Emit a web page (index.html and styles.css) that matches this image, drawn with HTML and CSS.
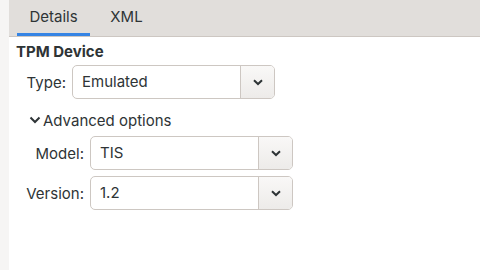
FILE: index.html
```html
<!DOCTYPE html>
<html lang="en">
<head>
    <meta charset="UTF-8">
    <title>TPM Device</title>
    <link rel="stylesheet" href="styles.css">
</head>
<body>
    <div class="side"></div>
    <div class="main">
        <div class="tabs">
            <div class="tab active">Details</div>
            <div class="tab">XML</div>
        </div>
        <div class="content">
            <h3>TPM Device</h3>
            <div class="row type-row">
                <label>Type:</label>
                <div class="combo type-combo">
                    <span class="value">Emulated</span>
                    <span class="arrow">
                        <svg width="10" height="7" viewBox="0 0 10 7"><path d="M1 1.2 L5 5 L9 1.2" fill="none" stroke="#2e3436" stroke-width="2"/></svg>
                    </span>
                </div>
            </div>
            <div class="expander">
                <svg width="12" height="8" viewBox="0 0 12 8"><path d="M1.5 1.5 L6 6 L10.5 1.5" fill="none" stroke="#2e3436" stroke-width="2"/></svg>
                <span>Advanced options</span>
            </div>
            <div class="advanced">
                <div class="row">
                    <label>Model:</label>
                    <div class="combo">
                        <span class="value">TIS</span>
                        <span class="arrow">
                            <svg width="10" height="7" viewBox="0 0 10 7"><path d="M1 1.2 L5 5 L9 1.2" fill="none" stroke="#2e3436" stroke-width="2"/></svg>
                        </span>
                    </div>
                </div>
                <div class="row">
                    <label>Version:</label>
                    <div class="combo">
                        <span class="value">1.2</span>
                        <span class="arrow">
                            <svg width="10" height="7" viewBox="0 0 10 7"><path d="M1 1.2 L5 5 L9 1.2" fill="none" stroke="#2e3436" stroke-width="2"/></svg>
                        </span>
                    </div>
                </div>
            </div>
        </div>
    </div>
</body>
</html>
```

FILE: styles.css
```css
body {
    margin: 0;
    width: 480px;
    height: 270px;
    display: flex;
    font-family: Inter, "Noto Sans", sans-serif;
    font-size: 15px;
    color: #2e3436;
    background: #ffffff;
    overflow: hidden;
}
.side {
    width: 9px;
    background-color: #f6f5f4;
}
.main {
    flex: 1;
}
.tabs {
    height: 37px;
    background-color: #e1dedb;
    border-bottom: 1px solid #cdc7c2;
    box-sizing: border-box;
    display: flex;
    padding-left: 8px;
}
.tab {
    min-width: 73px;
    text-align: center;
    padding: 0 12px;
    line-height: 33px;
    height: 36px;
    box-sizing: border-box;
}
.tab.active {
    border-bottom: 3px solid #3584e4;
}
.content {
    padding-left: 7px;
}
h3 {
    margin: 0;
    padding-top: 6px;
    font-size: 15px;
    font-weight: 700;
    line-height: 18px;
}
.row {
    display: flex;
    align-items: center;
}
.type-row {
    margin-top: 4px;
}
.row label {
    text-align: right;
    padding-right: 6px;
}
.type-row label {
    width: 50px;
}
.advanced {
    margin-top: 6px;
}
.advanced .row + .row {
    margin-top: 6px;
}
.advanced .row label {
    width: 68px;
}
.combo {
    display: flex;
    width: 203px;
    height: 34px;
    border: 1px solid #cdc7c2;
    border-radius: 5px;
    box-sizing: border-box;
    overflow: hidden;
    background: #ffffff;
}
.combo .value {
    flex: 1;
    padding-left: 9px;
    line-height: 32px;
}
.combo .arrow {
    width: 33px;
    border-left: 1px solid #cdc7c2;
    background: linear-gradient(#f9f8f7, #edebe9);
    display: flex;
    align-items: center;
    justify-content: center;
}
.expander {
    display: flex;
    align-items: center;
    gap: 2px;
    margin-top: 11px;
    padding-left: 13px;
    height: 20px;
}
```
